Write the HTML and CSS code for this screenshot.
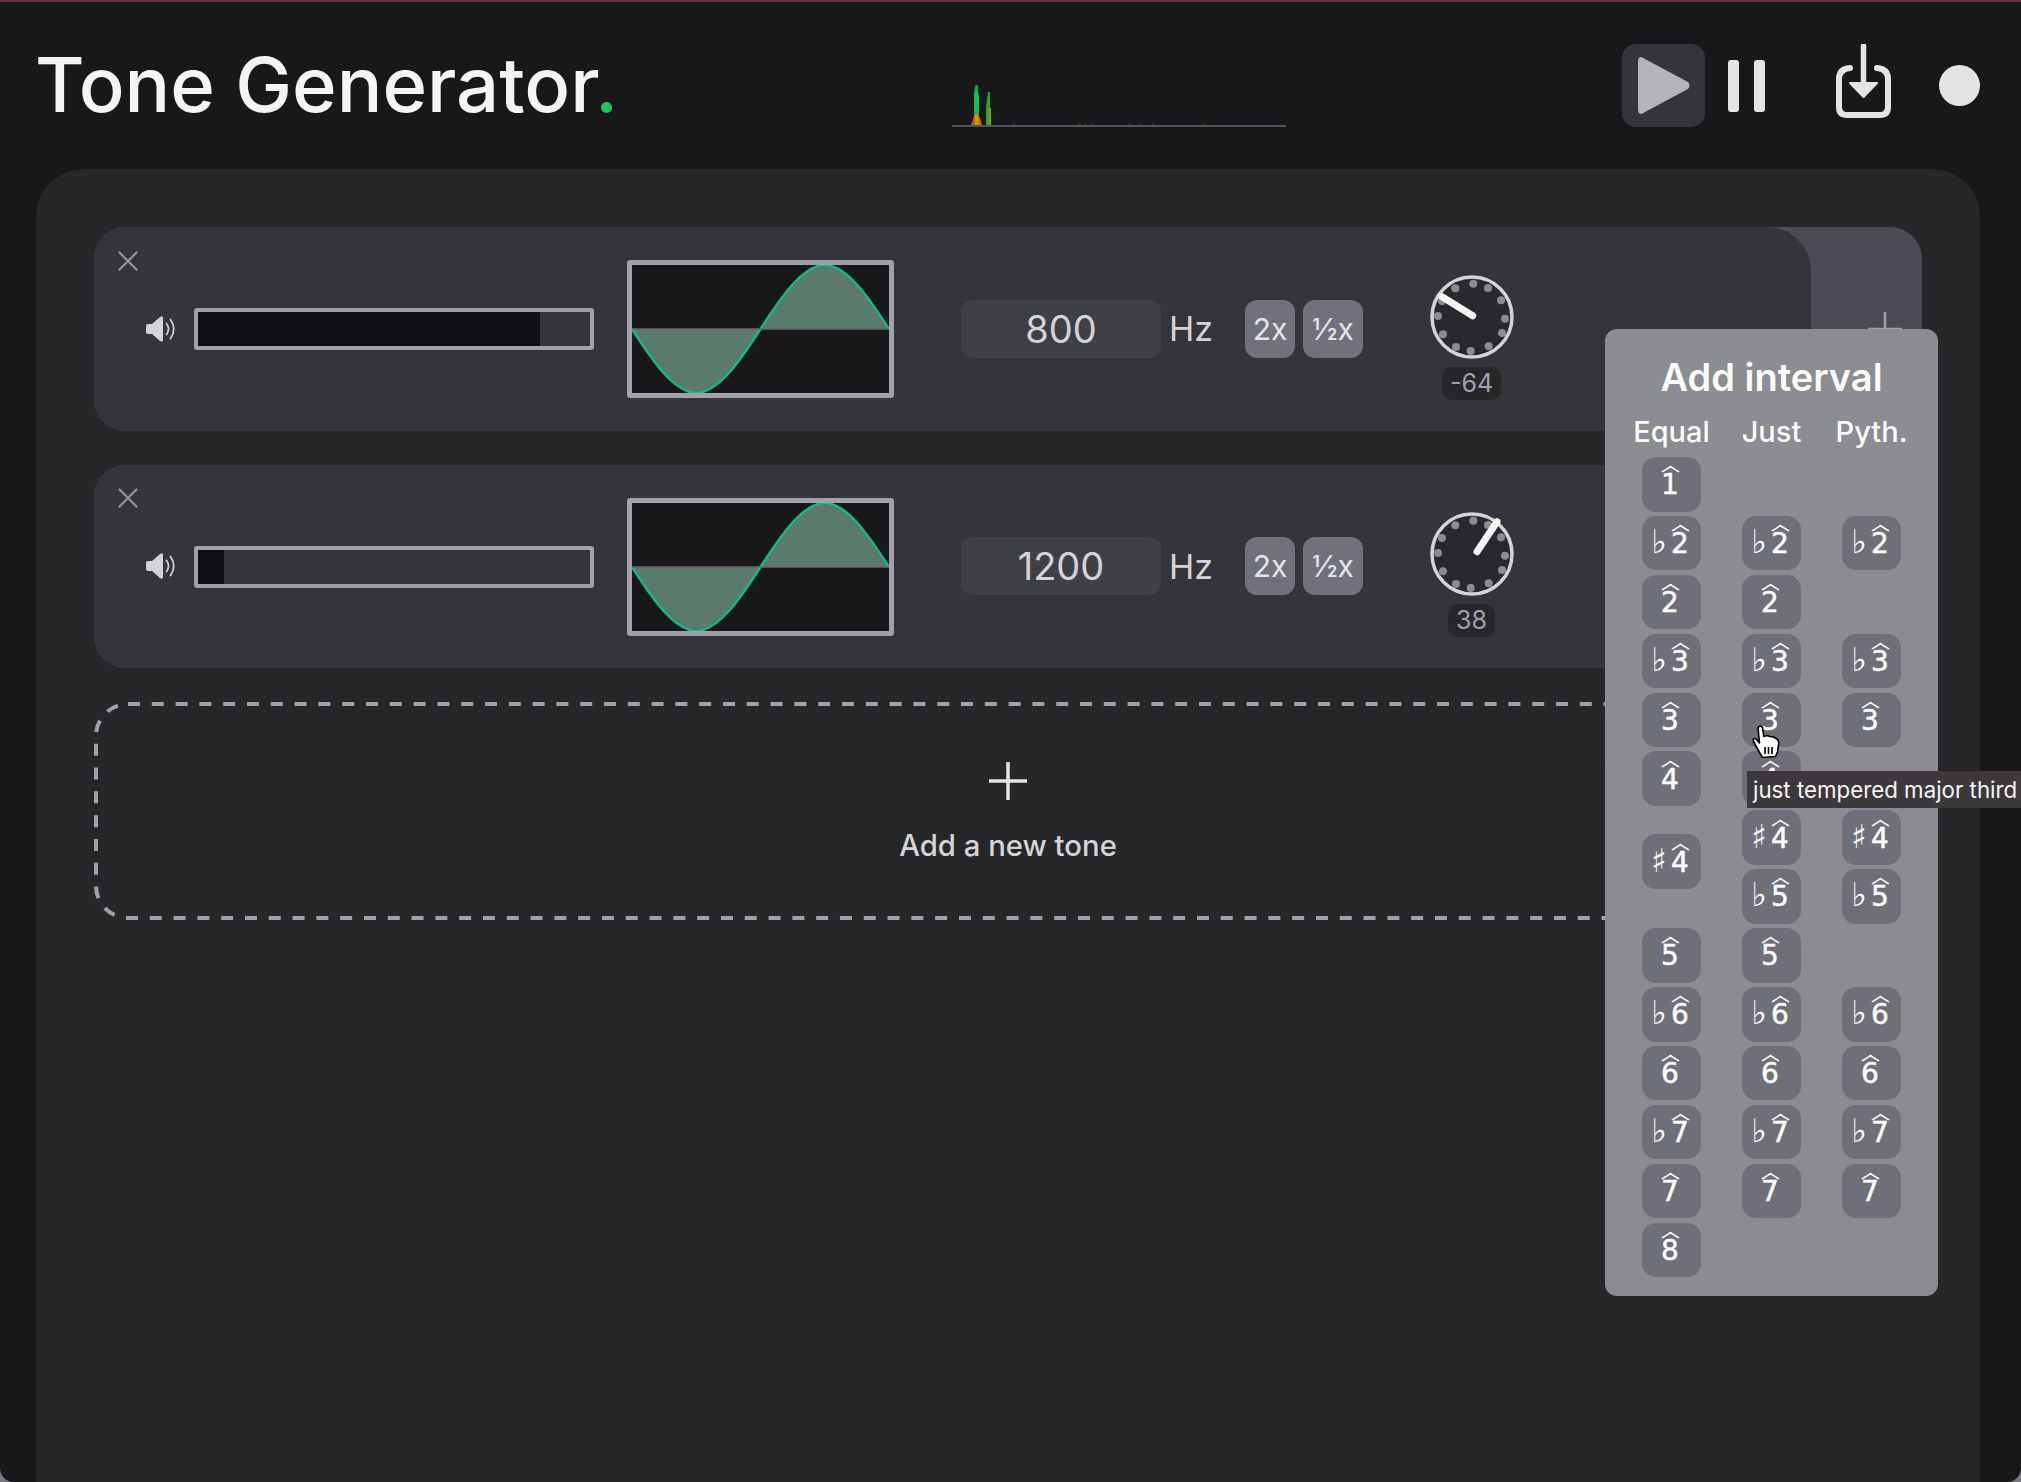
FILE: index.html
```html
<!DOCTYPE html>
<html lang="en">
<head>
  <meta charset="UTF-8">
  <meta name="viewport" content="width=device-width, initial-scale=1.0">
  <title>Tone Generator</title>
  <link rel="stylesheet" href="styles.css">
</head>
<body>

  <!-- Shared icons -->
  <svg class="defs" width="0" height="0">
    <symbol id="icon-close" viewBox="0 0 20 20">
      <path d="M0.8 0.8 L19.2 19.2 M19.2 0.8 L0.8 19.2" fill="none" stroke="currentColor" stroke-width="2.2"/>
    </symbol>
    <symbol id="icon-speaker" viewBox="0 0 30 28">
      <path d="M2 9 H6 L14 2 Q17 0 17 3 V25 Q17 28 14 26 L6 19 H2 Q0 19 0 17 V11 Q0 9 2 9 Z" fill="currentColor"/>
      <path d="M20.5 8.5 Q24.5 14 20.5 19.5 M24.5 4.5 Q31 14 24.5 23.5" fill="none" stroke="currentColor" stroke-width="1.7" stroke-linecap="round"/>
    </symbol>
    <symbol id="wave" viewBox="0 0 257 128">
      <path d="M0 64 C21.4 97.5 42.8 128 64.25 128 C85.7 128 107.1 97.5 128.5 64 C149.9 30.5 171.3 0 192.75 0 C214.2 0 235.6 30.5 257 64" fill="#5a7a6c" stroke="#12bb88" stroke-width="2.4"/>
      <path d="M0 64 H257" stroke="#6a6a70" stroke-opacity="0.7" stroke-width="2"/>
    </symbol>
    <symbol id="knob-face" viewBox="0 0 84 84">
      <circle cx="42" cy="42" r="40" fill="#29292d" stroke="#d4d4d8" stroke-width="3.5"/>
      <g fill="#8b8b90">
        <circle cx="43.3" cy="8.7" r="4"/>
        <circle cx="58" cy="13" r="4"/>
        <circle cx="71" cy="25.3" r="4"/>
        <circle cx="75" cy="43.7" r="4"/>
        <circle cx="72" cy="58" r="4"/>
        <circle cx="58.7" cy="71.3" r="4"/>
        <circle cx="40.7" cy="76" r="4"/>
        <circle cx="26" cy="72" r="4"/>
        <circle cx="13" cy="59.3" r="4"/>
        <circle cx="8" cy="41" r="4"/>
        <circle cx="12" cy="26" r="4"/>
        <circle cx="25.3" cy="13.3" r="4"/>
      </g>
    </symbol>
  </svg>

  <div class="topline"></div>

  <header class="header">
    <h1 class="title">Tone Generator<span class="dot">.</span></h1>

    <!-- Spectrum -->
    <svg class="spectrum" width="334" height="83" viewBox="0 0 334 83">
      <defs>
        <linearGradient id="peak" x1="0" y1="0" x2="0" y2="1">
          <stop offset="0" stop-color="#0d8f4a"/>
          <stop offset="0.2" stop-color="#12c25f"/>
          <stop offset="1" stop-color="#22b53a"/>
        </linearGradient>
      </defs>
      <path d="M22 81 V51 L23 42 L24 41 H26 V48 L27 52 V81 Z" fill="url(#peak)"/>
      <path d="M19 81 L21 76 L22 71 L26 69 L28 74 L30 81 Z" fill="#e0560f"/>
      <path d="M23 81 V71 L26 70 L27 81 Z" fill="#b5a412"/>
      <path d="M34 81 V63 L36 48 H38 V64 H39 V81 Z" fill="#27a820"/>
      <path d="M37 81 V64 H39 V81 Z" fill="#74a80e"/>
      <path d="M60 80 H63 M126 80 H129 M132 80 H135 M139 80 H142 M176 80 H179 M188 80 H190 M200 80 H202 M250 80 H254" stroke="#5c2a2a" stroke-width="1"/>
      <rect x="0" y="81" width="334" height="2" fill="#52525b"/>
    </svg>

    <div class="controls">
      <button class="play-btn">
        <svg width="53" height="57" viewBox="0 0 53 57"><path d="M0 5 Q0 -3 7 2 L50 25 Q53 28.5 50 32 L7 55 Q0 60 0 52 Z" fill="#b4b4b8"/></svg>
      </button>
      <svg class="pause" width="37" height="52" viewBox="0 0 37 52">
        <rect x="0" y="0" width="11" height="52" rx="3" fill="#e4e4e7"/>
        <rect x="26" y="0" width="11" height="52" rx="3" fill="#e4e4e7"/>
      </svg>
      <svg class="save" width="55" height="83" viewBox="0 0 55 83">
        <path d="M14 24 Q3 25 3 35 V63 Q3 71 11 71 H44 Q52 71 52 63 V35 Q52 25 41 24" fill="none" stroke="#e4e4e7" stroke-width="6" stroke-linecap="round"/>
        <path d="M27.5 2 V48" stroke="#e4e4e7" stroke-width="5.5" stroke-linecap="round"/>
        <path d="M14 39 L27.5 53 L41 39 Z" fill="#e4e4e7" stroke="#e4e4e7" stroke-linejoin="round" stroke-width="2"/>
      </svg>
      <div class="record"></div>
    </div>
  </header>

  <main class="panel">

    <div class="tone">
      <div class="tone-main">
        <svg class="close"><use href="#icon-close"/></svg>
        <svg class="speaker"><use href="#icon-speaker"/></svg>
        <div class="gain"><div class="gain-fill" style="width: 342px"></div></div>
        <svg class="scope"><use href="#wave"/></svg>
        <input class="freq" type="text" value="800">
        <span class="hz">Hz</span>
        <button class="mult">2x</button>
        <button class="mult half">½x</button>
        <div class="knob">
          <svg class="knob-dial" viewBox="0 0 84 84">
            <use href="#knob-face"/>
            <path d="M42.7 40.7 L12 21.7" stroke="#f4f4f5" stroke-width="7" stroke-linecap="round"/>
          </svg>
          <span class="knob-value">-64</span>
        </div>
      </div>
      <div class="tone-add">
        <svg width="34" height="34" viewBox="0 0 34 34"><path d="M17 0 V34 M0 17 H34" stroke="#a1a1aa" stroke-width="2.5"/></svg>
      </div>
    </div>

    <div class="tone">
      <div class="tone-main">
        <svg class="close"><use href="#icon-close"/></svg>
        <svg class="speaker"><use href="#icon-speaker"/></svg>
        <div class="gain"><div class="gain-fill" style="width: 26px"></div></div>
        <svg class="scope"><use href="#wave"/></svg>
        <input class="freq" type="text" value="1200">
        <span class="hz">Hz</span>
        <button class="mult">2x</button>
        <button class="mult half">½x</button>
        <div class="knob">
          <svg class="knob-dial" viewBox="0 0 84 84">
            <use href="#knob-face"/>
            <path d="M47 39.7 L67 9.7" stroke="#f4f4f5" stroke-width="7" stroke-linecap="round"/>
          </svg>
          <span class="knob-value">38</span>
        </div>
      </div>
      <div class="tone-add"></div>
    </div>

    <div class="add-tone">
      <svg class="add-border" width="1828" height="218" viewBox="0 0 1828 218">
        <rect x="2" y="2" width="1824" height="214" rx="32" fill="none" stroke="#a1a1aa" stroke-width="4" stroke-dasharray="12 11.8"/>
      </svg>
      <svg width="38" height="38" viewBox="0 0 38 38"><path d="M19 0 V38 M0 19 H38" stroke="#e4e4e7" stroke-width="3.5"/></svg>
      <span class="add-label">Add a new tone</span>
    </div>

    <!-- Add interval popup -->
    <div class="popup">
      <h2 class="popup-title">Add interval</h2>
      <div class="popup-cols">
        <span>Equal</span><span>Just</span><span>Pyth.</span>
      </div>
      <div class="degrees">
        <button class="deg"><span class="hat">1</span></button><i></i><i></i>

        <button class="deg"><b>♭</b><span class="hat">2</span></button>
        <button class="deg"><b>♭</b><span class="hat">2</span></button>
        <button class="deg"><b>♭</b><span class="hat">2</span></button>

        <button class="deg"><span class="hat">2</span></button>
        <button class="deg"><span class="hat">2</span></button>
        <i></i>

        <button class="deg"><b>♭</b><span class="hat">3</span></button>
        <button class="deg"><b>♭</b><span class="hat">3</span></button>
        <button class="deg"><b>♭</b><span class="hat">3</span></button>

        <button class="deg"><span class="hat">3</span></button>
        <button class="deg"><span class="hat">3</span></button>
        <button class="deg"><span class="hat">3</span></button>

        <button class="deg"><span class="hat">4</span></button>
        <button class="deg"><span class="hat">4</span></button>
        <i></i>

        <button class="deg tall"><b>♯</b><span class="hat">4</span></button>
        <button class="deg"><b>♯</b><span class="hat">4</span></button>
        <button class="deg"><b>♯</b><span class="hat">4</span></button>

        <button class="deg"><b>♭</b><span class="hat">5</span></button>
        <button class="deg"><b>♭</b><span class="hat">5</span></button>

        <button class="deg"><span class="hat">5</span></button>
        <button class="deg"><span class="hat">5</span></button>
        <i></i>

        <button class="deg"><b>♭</b><span class="hat">6</span></button>
        <button class="deg"><b>♭</b><span class="hat">6</span></button>
        <button class="deg"><b>♭</b><span class="hat">6</span></button>

        <button class="deg"><span class="hat">6</span></button>
        <button class="deg"><span class="hat">6</span></button>
        <button class="deg"><span class="hat">6</span></button>

        <button class="deg"><b>♭</b><span class="hat">7</span></button>
        <button class="deg"><b>♭</b><span class="hat">7</span></button>
        <button class="deg"><b>♭</b><span class="hat">7</span></button>

        <button class="deg"><span class="hat">7</span></button>
        <button class="deg"><span class="hat">7</span></button>
        <button class="deg"><span class="hat">7</span></button>

        <button class="deg"><span class="hat">8</span></button><i></i><i></i>
      </div>
    </div>
  </main>

  <!-- Hover state: cursor and tooltip -->
  <svg class="cursor" width="30" height="33" viewBox="0 0 28 33">
    <path d="M6 3 C6.5 0.5 10 0.5 10.5 3 L11.8 11.5 L15 10.5 L18 11.5 L21.5 12 L25 14 C26.8 15 27 17 26.5 20 L25.5 27 L23.5 31.5 L10.5 32.5 L7.5 27.5 L1.5 16.5 C0.2 14 2.8 12.5 4.5 14.5 L7.5 18 Z" fill="#fff" stroke="#000" stroke-width="1.6" stroke-linejoin="round"/>
    <path d="M13 22 V29 M16.5 22 V29 M20 22 V29" stroke="#000" stroke-width="1.6"/>
  </svg>
  <div class="tooltip">just tempered major third</div>

</body>
</html>
```

FILE: styles.css
```css
* {
  box-sizing: border-box;
}

html, body {
  margin: 0;
  padding: 0;
}

body {
  position: relative;
  width: 2021px;
  height: 1482px;
  overflow: hidden;
  background-color: #18181b;
  font-family: Inter, "Liberation Sans", sans-serif;
  color: #e4e4e7;
}

/* window corners at the bottom */
body::after {
  content: "";
  position: absolute;
  inset: 0;
  border-radius: 0 0 14px 14px;
  box-shadow: 0 0 0 14px #77777c;
  pointer-events: none;
}

button {
  border: none;
  padding: 0;
  font-family: inherit;
  color: inherit;
}

.defs {
  position: absolute;
}

.topline {
  height: 2px;
  background-color: #6b2f3d;
}

.header {
  display: flex;
  align-items: center;
  justify-content: space-between;
  height: 167px;
  padding: 0 41px 0 35px;
}

.title {
  margin: 0 0 3px;
  font-size: 76px;
  font-weight: 500;
  line-height: 1;
  color: #f4f4f5;
}

.dot {
  color: #22c55e;
}

.spectrum {
  flex: none;
  margin-right: 1px;
}

.controls {
  display: flex;
  align-items: center;
  height: 83px;
}

.play-btn {
  display: flex;
  align-items: center;
  width: 83px;
  height: 83px;
  padding-left: 16px;
  border-radius: 14px;
  background-color: #34343a;
}

.pause {
  margin-left: 23px;
}

.save {
  margin-left: 71px;
}

.record {
  width: 41px;
  height: 41px;
  margin-left: 48px;
  border-radius: 50%;
  background-color: #e4e4e7;
}

.panel {
  position: relative;
  height: 1313px;
  margin: 0 41px 0 36px;
  padding: 58px;
  border-radius: 48px 48px 0 0;
  background-color: #27272a;
}

.tone {
  display: flex;
  height: 203.5px;
  margin-bottom: 34px;
  border-radius: 32px;
  background-color: #4b4b53;
}

.tone-main {
  position: relative;
  flex: 1;
  display: flex;
  align-items: center;
  padding-left: 52px;
  border-radius: 32px 44px 44px 32px;
  background-color: #34343a;
}

.tone-add {
  display: flex;
  align-items: center;
  justify-content: center;
  width: 111px;
  padding-left: 36px;
}

.close {
  position: absolute;
  left: 24px;
  top: 23.75px;
  width: 20px;
  height: 20px;
  color: #93939a;
}

.speaker {
  width: 30px;
  height: 28px;
  margin-right: 18px;
  color: #d4d4d8;
}

.gain {
  width: 400px;
  height: 42px;
  margin-top: 1px;
  border: 4px solid #a1a1aa;
  border-radius: 3px;
}

.gain-fill {
  height: 100%;
  background-color: #100f14;
}

.scope {
  width: 267px;
  height: 138px;
  margin: 1px 0 0 33px;
  border: 5px solid #a1a1aa;
  border-radius: 3px;
  background-color: #18181b;
}

.freq {
  width: 200px;
  height: 58px;
  margin-left: 67px;
  border: none;
  border-radius: 12px;
  background-color: #3f3f46;
  font-family: inherit;
  font-size: 38px;
  text-align: center;
  color: #d4d4d8;
}

.hz {
  margin-left: 8px;
  font-size: 34px;
  color: #d4d4d8;
}

.mult {
  width: 50px;
  height: 58px;
  margin-left: 32px;
  border-radius: 12px;
  background-color: #71717a;
  font-size: 30px;
  color: #e4e4e7;
}

.half {
  width: 60px;
  margin-left: 8px;
}

.knob {
  align-self: flex-start;
  display: flex;
  flex-direction: column;
  align-items: center;
  width: 84px;
  margin: 47.75px 0 0 66.5px;
}

.knob-dial {
  display: block;
  width: 84px;
  height: 84px;
}

.knob-value {
  margin-top: 8px;
  padding: 0 8px;
  height: 33px;
  border-radius: 10px;
  background-color: #27272a;
  font-size: 25px;
  line-height: 33px;
  color: #a1a1aa;
}

.add-tone {
  position: relative;
  display: flex;
  flex-direction: column;
  align-items: center;
  height: 218px;
  padding-top: 60px;
}

.add-border {
  position: absolute;
  left: 0;
  top: 0;
}

.add-label {
  margin-top: 28px;
  font-size: 29.3px;
  font-weight: 500;
  color: #d4d4d8;
}

.popup {
  position: absolute;
  top: 160px;
  right: 42px;
  width: 333px;
  height: 967px;
  padding: 25px 37px 0;
  border-radius: 12px;
  background: linear-gradient(135deg, #8c8c93, #8a8a8f);
  color: #fafafa;
}

.popup-title {
  margin: 0 -37px;
  font-size: 38px;
  font-weight: 600;
  line-height: 46px;
  text-align: center;
}

.popup-cols {
  display: grid;
  grid-template-columns: repeat(3, 59px);
  column-gap: 41px;
  justify-items: center;
  margin-top: 18px;
  font-size: 29px;
  font-weight: 500;
  line-height: 28px;
  white-space: nowrap;
}

.degrees {
  display: grid;
  grid-template-columns: repeat(3, 59px);
  grid-auto-rows: 54.5px;
  gap: 4.4px 41px;
  margin-top: 11px;
}

.deg {
  padding-right: 3px;
  border-radius: 14px;
  background-color: #6f6f77;
  font-family: "DejaVu Sans", sans-serif;
  font-size: 28px;
  line-height: 1;
  color: #fafafa;
  -webkit-text-stroke: 0.5px #fafafa;
}

.deg b {
  margin-right: 4px;
  font-weight: 400;
  font-size: 33px;
  line-height: 27px;
  -webkit-text-stroke: 0;
}

/* scale degree caret, sits above the digit */
.hat {
  position: relative;
  display: inline-block;
  margin-top: 2px;
}

.hat::before {
  content: "";
  position: absolute;
  left: 50%;
  top: -6px;
  width: 11px;
  height: 11px;
  margin-left: -5.5px;
  border-top: 2.6px solid #fafafa;
  border-left: 2.6px solid #fafafa;
  transform: scaleY(0.62) rotate(45deg);
}

.tall {
  grid-row: span 2;
  height: 54.5px;
  margin-top: 24px;
}

.cursor {
  position: absolute;
  left: 1751px;
  top: 725px;
}

.tooltip {
  position: absolute;
  left: 1747px;
  top: 771px;
  width: 274px;
  height: 37px;
  padding-left: 6px;
  background-color: #3c383c;
  font-size: 22.3px;
  line-height: 37px;
  color: #f4f4f5;
  white-space: nowrap;
}
```
